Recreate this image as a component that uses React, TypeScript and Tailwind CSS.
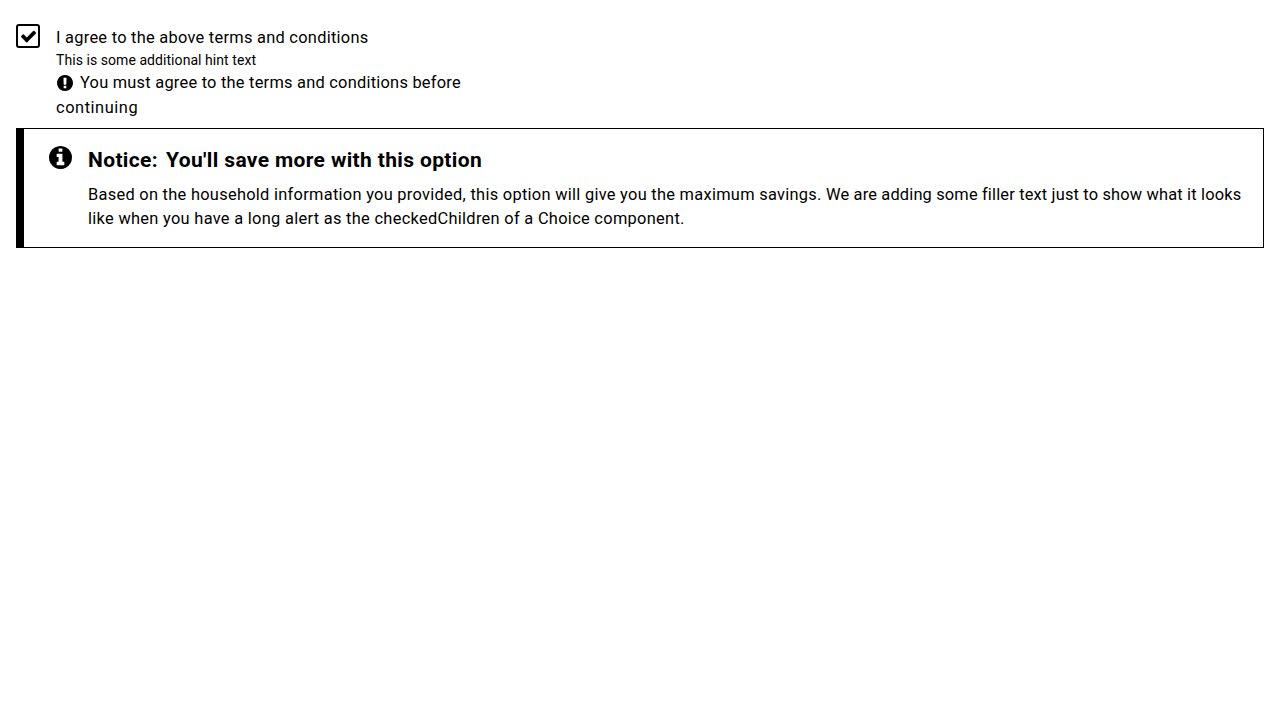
function CheckIcon() {
  return (
    <svg className="h-[12.5px] w-[15px]" viewBox="121 270 1550 1252" preserveAspectRatio="none" fill="currentColor" aria-hidden="true">
      <path d="M1671 566L1643 634 919 1358 783 1494 715 1522 647 1494 511 1358 149 996 121 928 149 860 285 724 353 696 421 724 715 1019 1371 362 1439 334 1507 362 1643 498z" />
    </svg>
  );
}

function AlertIcon() {
  return (
    <svg className="mt-1 ml-px size-4 shrink-0" viewBox="128 128 1536 1536" fill="currentColor" aria-hidden="true">
      <path d="M896 128q209 0 385.5 103t279.5 279.5 103 385.5-103 385.5-279.5 279.5-385.5 103-385.5-103-279.5-279.5-103-385.5 103-385.5 279.5-279.5 385.5-103zm128 1247v-190q0-14-9-23.5t-22-9.5h-192q-13 0-23 10t-10 23v190q0 13 10 23t23 10h192q13 0 22-9.5t9-23.5zm-2-344l18-621q0-12-10-18-10-8-24-8h-220q-14 0-24 8-10 6-10 18l17 621q0 10 10 17.5t24 7.5h185q14 0 23.5-7.5t10.5-17.5z" />
    </svg>
  );
}

function InfoIcon() {
  return (
    <svg className="mt-[17px] size-[23px] shrink-0" viewBox="128 128 1536 1536" fill="currentColor" aria-hidden="true">
      <path d="M1152 1376v-160q0-14-9-23t-23-9h-96v-512q0-14-9-23t-23-9h-320q-14 0-23 9t-9 23v160q0 14 9 23t23 9h96v320h-96q-14 0-23 9t-9 23v160q0 14 9 23t23 9h448q14 0 23-9t9-23zm-128-896v-160q0-14-9-23t-23-9h-192q-14 0-23 9t-9 23v160q0 14 9 23t23 9h192q14 0 23-9t9-23zm640 416q0 209-103 385.5t-279.5 279.5-385.5 103-385.5-103-279.5-279.5-103-385.5 103-385.5 279.5-279.5 385.5-103 385.5 103 279.5 279.5 103 385.5z" />
    </svg>
  );
}

export default function App() {
  return (
    <main className="bg-white px-4 pt-6 font-['Roboto',sans-serif] text-[16.4px] text-black">
      <div className="flex h-[104px] gap-4 whitespace-nowrap">
        <span role="checkbox" aria-checked="true" aria-labelledby="terms" className="flex size-6 shrink-0 items-center justify-center rounded-[3px] border-2 border-black pt-px pl-px">
          <CheckIcon />
        </span>
        <div>
          <p id="terms" className="mt-[2px] h-6 leading-6 tracking-[0.27px]">I agree to the above terms and conditions</p>
          <p className="h-[21px] text-sm leading-5 tracking-[0.06px]">This is some additional hint text</p>
          <div className="flex">
            <AlertIcon />
            <p className="ml-[7px] h-[25px] leading-6 tracking-[0.24px]">You must agree to the terms and conditions before</p>
          </div>
          <p className="leading-6 tracking-[0.55px]">continuing</p>
        </div>
      </div>
      <section className="flex h-[120px] border border-l-8 border-black pl-[25px] whitespace-nowrap">
        <InfoIcon />
        <div className="ml-4 pt-[18px]">
          <h2 className="flex h-9 gap-2 text-[21px] leading-[26px] font-bold tracking-[0.36px]">
            <span>Notice:</span>
            <span>You'll save more with this option</span>
          </h2>
          <p className="leading-6">
            <span className="tracking-[0.285px]">Based on the household information you provided, this option will give you the maximum savings. </span>
            <span className="tracking-[0.17px]">We are adding some filler text just to show what it looks</span>
          </p>
          <p className="leading-6 tracking-[0.3px]">like when you have a long alert as the checkedChildren of a Choice component.</p>
        </div>
      </section>
    </main>
  );
}
